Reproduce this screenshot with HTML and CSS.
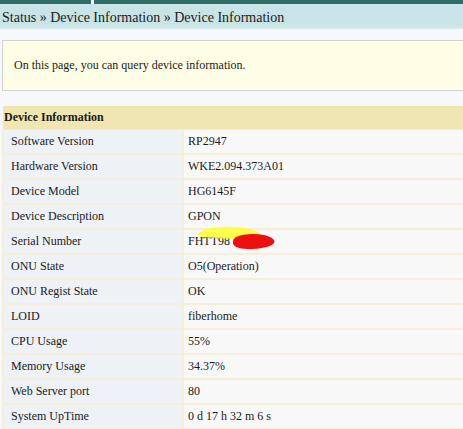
FILE: index.html
```html
<!DOCTYPE html>
<html>
<head>
<meta charset="utf-8">
<link rel="stylesheet" href="styles.css">
</head>
<body>
<div class="topbar"><div class="tab"></div><div class="gap"></div><div class="rest"></div></div>
<div class="crumb">Status » Device Information » Device Information</div>
<div class="content">
  <div class="note">On this page, you can query device information.</div>
  <table class="info">
    <tr><th colspan="2">Device Information</th></tr>
    <tr><td class="k">Software Version</td><td class="v">RP2947</td></tr>
    <tr><td class="k">Hardware Version</td><td class="v">WKE2.094.373A01</td></tr>
    <tr><td class="k">Device Model</td><td class="v">HG6145F</td></tr>
    <tr><td class="k">Device Description</td><td class="v">GPON</td></tr>
    <tr><td class="k">Serial Number</td><td class="v serial">FHTT98<svg class="redact" width="80" height="28" viewBox="0 0 80 28"><path d="M1 8 C6 3 20 1 38 2 C50 3 62 6 63 10 C64 14 50 15 36 14 C22 13 10 13 4 12 C0 11 -1 10 1 8 Z" fill="#ffff20" opacity="0.8"/><path d="M38 12 C44 9 56 8 66 10 C74 12 78 15 76 18 C73 22 62 24 50 24 C40 24 34 21 35 17 C35 15 36 13 38 12 Z" fill="#ee1010"/></svg></td></tr>
    <tr><td class="k">ONU State</td><td class="v">O5(Operation)</td></tr>
    <tr><td class="k">ONU Regist State</td><td class="v">OK</td></tr>
    <tr><td class="k">LOID</td><td class="v">fiberhome</td></tr>
    <tr><td class="k">CPU Usage</td><td class="v">55%</td></tr>
    <tr><td class="k">Memory Usage</td><td class="v">34.37%</td></tr>
    <tr><td class="k">Web Server port</td><td class="v">80</td></tr>
    <tr><td class="k">System UpTime</td><td class="v">0 d 17 h 32 m 6 s</td></tr>
  </table>
</div>
</body>
</html>
```
FILE: styles.css
```css
html, body {
  margin: 0;
  padding: 0;
  background: #f7f8fd;
  font-family: "Liberation Serif", "Times New Roman", serif;
  color: #1a1a1a;
  overflow: hidden;
}
.topbar {
  display: flex;
  height: 4px;
  background: #fff;
}
.topbar .tab { width: 91px; background: #2e6e66; }
.topbar .gap { width: 3px; background: #ffffff; }
.topbar .rest { flex: 1; background: #2e6e66; }
.crumb {
  height: 25px;
  line-height: 27px;
  padding-left: 2px;
  font-size: 14px;
  background: linear-gradient(#c9e4e6 0, #c9e4e6 80%, #d6eaec 100%);
  color: #1a1a1a;
  white-space: nowrap;
}
.content {
  padding: 11px 0 0 2px;
}
.note {
  border: 1px solid #d2d2d2;
  border-right: none;
  background: #fefee6;
  height: 49px;
  line-height: 49px;
  padding-left: 11px;
  font-size: 12px;
  white-space: nowrap;
}
table.info {
  margin-top: 15px;
  width: 100%;
  border-collapse: collapse;
  font-size: 12px;
}
table.info th {
  background: #f0e6b1;
  text-align: left;
  font-weight: bold;
  height: 23px;
  padding: 0 0 0 1px;
  border-bottom: 1px solid #f3ecc9;
}
table.info td {
  height: 23px;
  padding: 0;
  border-bottom: 2px solid #f4efd6;
  white-space: nowrap;
}
table.info td.k {
  width: 171px;
  padding-left: 7px;
  background: #eef1f5;
  border-left: 2px solid #f4efd6;
  border-right: 2px solid #f4efd6;
}
table.info td.v {
  padding-left: 4px;
  background: #f8f8f8;
}
td.serial { position: relative; }
.redact {
  position: absolute;
  left: 14px;
  top: -5px;
}
```
